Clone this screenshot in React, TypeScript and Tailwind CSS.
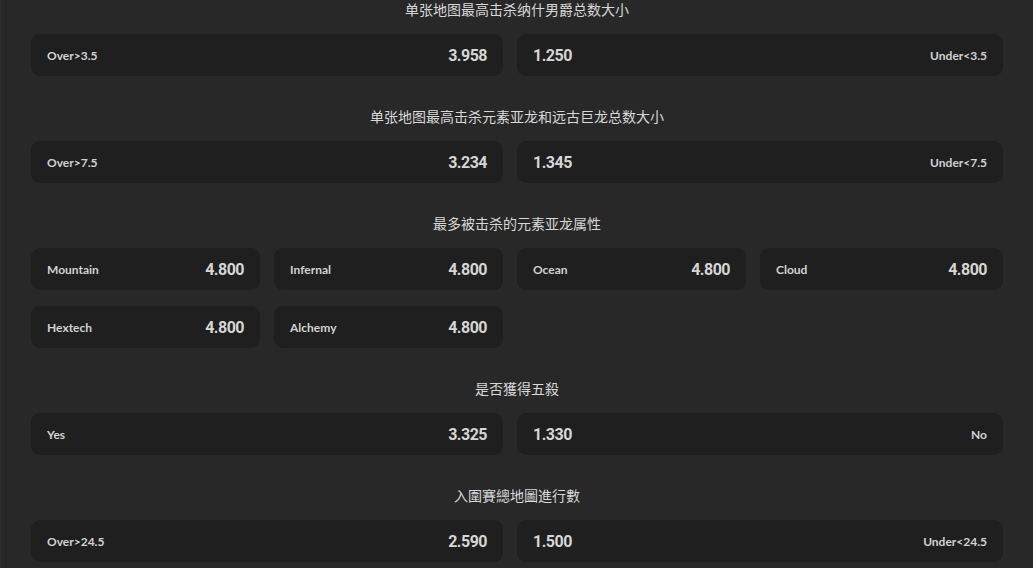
type Option = { label: string; odds: string; side?: 'left' | 'right' }

type Market = {
  title: string
  layout: 'pair' | 'grid'
  options: Option[]
}

const markets: Market[] = [
  {
    title: '单张地图最高击杀纳什男爵总数大小',
    layout: 'pair',
    options: [
      { label: 'Over>3.5', odds: '3.958', side: 'left' },
      { label: 'Under<3.5', odds: '1.250', side: 'right' },
    ],
  },
  {
    title: '单张地图最高击杀元素亚龙和远古巨龙总数大小',
    layout: 'pair',
    options: [
      { label: 'Over>7.5', odds: '3.234', side: 'left' },
      { label: 'Under<7.5', odds: '1.345', side: 'right' },
    ],
  },
  {
    title: '最多被击杀的元素亚龙属性',
    layout: 'grid',
    options: [
      { label: 'Mountain', odds: '4.800' },
      { label: 'Infernal', odds: '4.800' },
      { label: 'Ocean', odds: '4.800' },
      { label: 'Cloud', odds: '4.800' },
      { label: 'Hextech', odds: '4.800' },
      { label: 'Alchemy', odds: '4.800' },
    ],
  },
  {
    title: '是否獲得五殺',
    layout: 'pair',
    options: [
      { label: 'Yes', odds: '3.325', side: 'left' },
      { label: 'No', odds: '1.330', side: 'right' },
    ],
  },
  {
    title: '入圍賽總地圖進行數',
    layout: 'pair',
    options: [
      { label: 'Over>24.5', odds: '2.590', side: 'left' },
      { label: 'Under<24.5', odds: '1.500', side: 'right' },
    ],
  },
]

const labelCls =
  "font-['Lato','Liberation_Sans',sans-serif] text-[12px] font-bold text-[#d2d2d2]"
const oddsCls =
  "font-['Roboto','Liberation_Sans',sans-serif] text-[16px] font-bold tracking-[-0.5px] text-[#d6d6d6]"

function OddsCard({ option, span }: { option: Option; span?: boolean }) {
  const reversed = option.side === 'right'
  return (
    <button
      type="button"
      className={`flex h-[42px] items-center justify-between rounded-[9px] bg-[#1f1f1f] px-4 pt-[2px] hover:bg-[#242424] ${
        span ? 'col-span-2' : ''
      }`}
    >
      {reversed ? (
        <>
          <span className={oddsCls}>{option.odds}</span>
          <span className={labelCls}>{option.label}</span>
        </>
      ) : (
        <>
          <span className={labelCls}>{option.label}</span>
          <span className={oddsCls}>{option.odds}</span>
        </>
      )}
    </button>
  )
}

export default function App() {
  return (
    <div className="h-[568px] w-[1033px] overflow-hidden border-l border-[#2f2f2f] bg-[#282828]">
      <div className="pl-[30px] pr-[30px]">
        {markets.map((m) => (
          <section key={m.title} className="mb-[31px]">
            <h3 className="mb-4 h-[18px] text-center font-['Noto_Sans_CJK_SC','Noto_Sans',sans-serif] text-[14px] leading-[18px] text-[#d8d8d8]">
              {m.title}
            </h3>
            <div className="grid grid-cols-[229px_229px_229px_243px] gap-x-[14px] gap-y-4">
              {m.options.map((o) => (
                <OddsCard key={o.label} option={o} span={m.layout === 'pair'} />
              ))}
            </div>
          </section>
        ))}
      </div>
    </div>
  )
}
